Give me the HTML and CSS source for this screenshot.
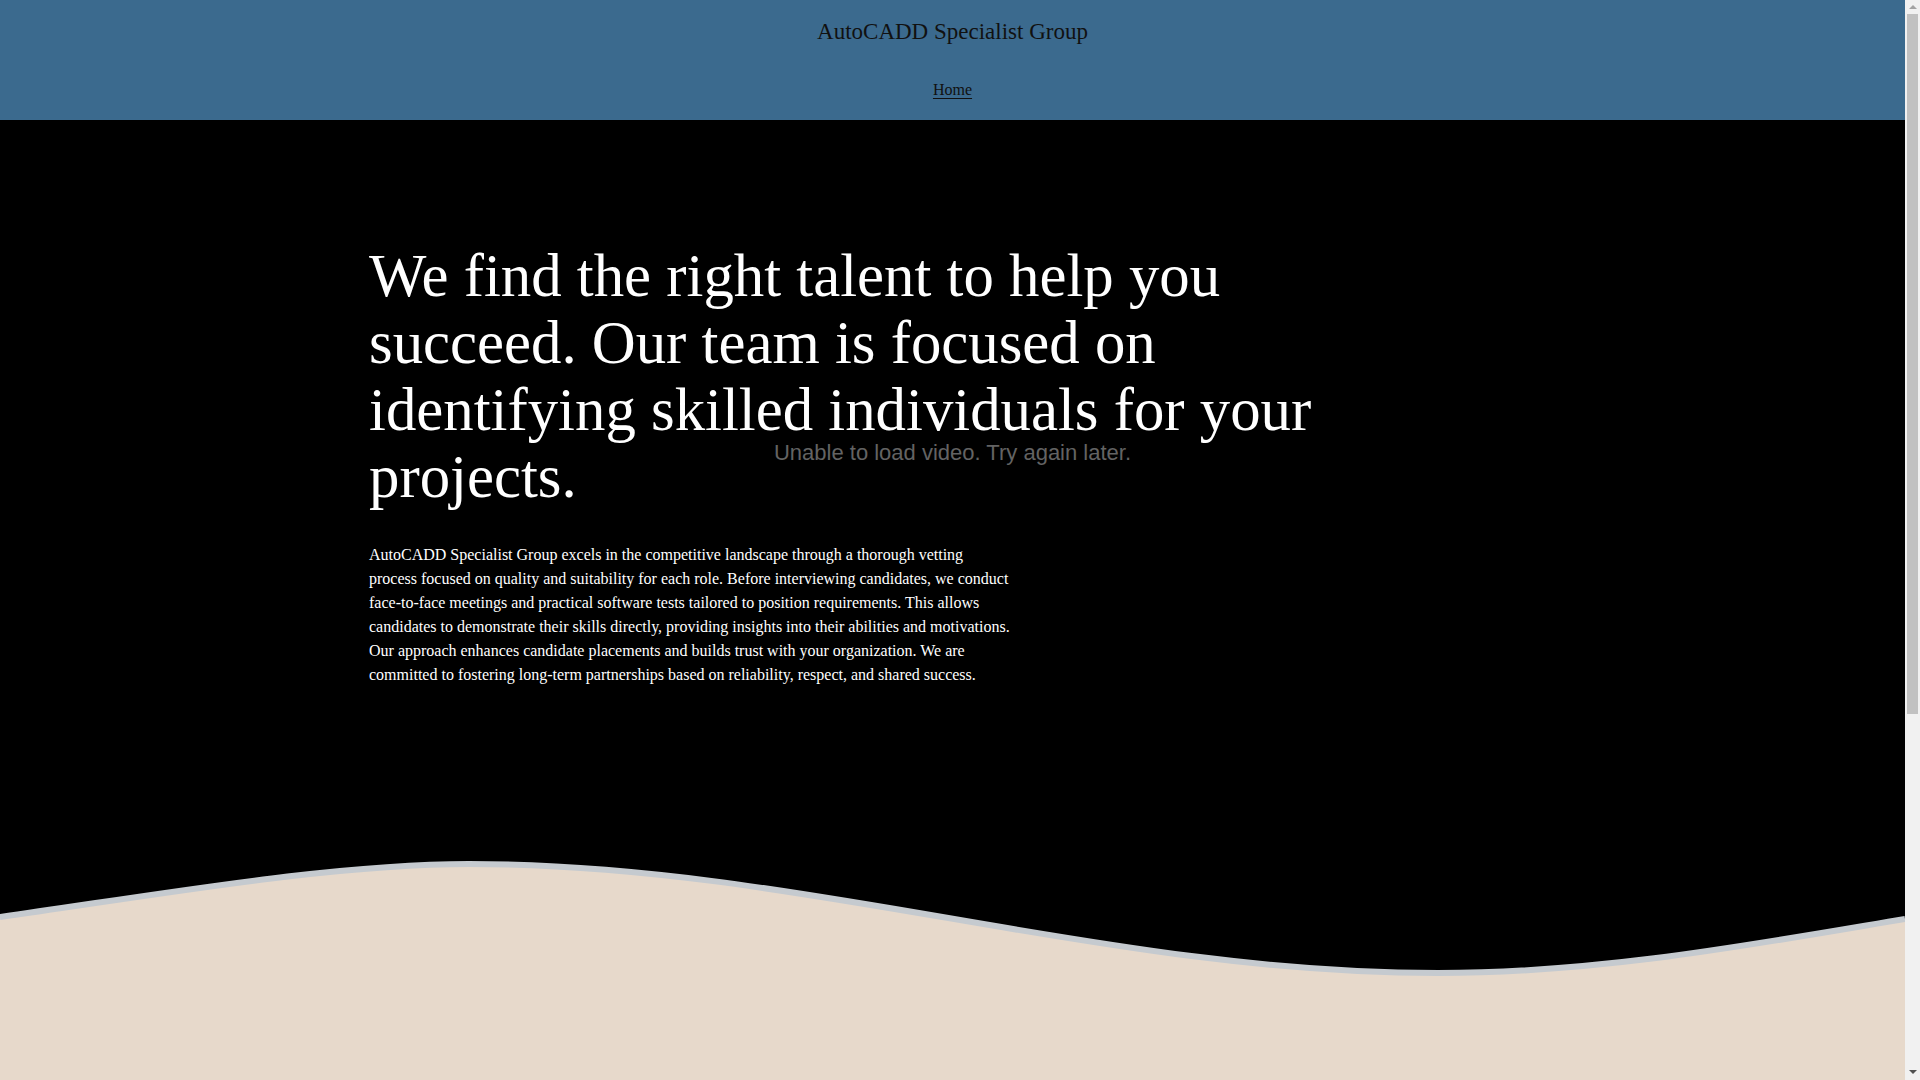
FILE: index.html
```html
<!DOCTYPE html>
<html lang="en">
<head>
<meta charset="utf-8">
<title>AutoCADD Specialist Group</title>
<link rel="stylesheet" href="styles.css">
</head>
<body>
<div class="page">
  <header class="site-header">
    <div class="site-title">AutoCADD Specialist Group</div>
    <nav class="site-nav"><a class="nav-link" href="#">Home</a></nav>
  </header>
  <section class="hero">
    <div class="hero-video"><span class="video-msg">Unable to load video. Try again later.</span></div>
    <div class="hero-inner">
      <h1 class="hero-title">We find the right talent to help you succeed. Our team is focused on identifying skilled individuals for your projects.</h1>
      <p class="hero-text">AutoCADD Specialist Group excels in the competitive landscape through a thorough vetting process focused on quality and suitability for each role. Before interviewing candidates, we conduct face-to-face meetings and practical software tests tailored to position requirements. This allows candidates to demonstrate their skills directly, providing insights into their abilities and motivations. Our approach enhances candidate placements and builds trust with your organization. We are committed to fostering long-term partnerships based on reliability, respect, and shared success.</p>
    </div>
  </section>
  <svg class="divider" viewBox="0 0 1905 135" preserveAspectRatio="none" aria-hidden="true">
    <path d="M0,0 L0,67 C150,46 330,14 469,14 C800,14 1100,123 1438,123 C1600,123 1750,95 1905,69 L1905,0 Z" fill="#000"/>
    <path d="M0,67 C150,46 330,14 469,14 C800,14 1100,123 1438,123 C1600,123 1750,95 1905,69" fill="none" stroke="#c5cacf" stroke-width="6"/>
  </svg>
  <section class="lower"></section>
</div>
<div class="scrollbar" aria-hidden="true">
  <span class="sb-arrow sb-up"></span>
  <span class="sb-thumb"></span>
  <span class="sb-fill"></span>
  <span class="sb-arrow sb-down"></span>
</div>
</body>
</html>
```

FILE: styles.css
```css
html, body {
  margin: 0;
  padding: 0;
}
body {
  font-family: "Liberation Serif", "Times New Roman", serif;
  background: #e7d9cb;
  display: flex;
  align-items: flex-start;
}
.page {
  flex: 1;
  min-width: 0;
}
.scrollbar {
  position: sticky;
  top: 0;
  width: 15px;
  height: 100vh;
  flex: none;
  background: #f1f1f1;
  display: flex;
  flex-direction: column;
  align-items: center;
}
.sb-arrow {
  flex: none;
  width: 0;
  height: 0;
  border-left: 4px solid transparent;
  border-right: 4px solid transparent;
}
.sb-up {
  margin: 5px 0 5px;
  border-bottom: 4px solid #a3a3a3;
}
.sb-down {
  margin: 5px 0 6px;
  border-top: 4px solid #505050;
}
.sb-thumb {
  width: 11px;
  height: 700px;
  background: #c1c1c1;
  flex: none;
}
.sb-fill {
  flex: 1;
}
.site-header {
  background: #3b6a8e;
  padding: 19px 0 21px;
  text-align: center;
  color: #111;
}
.site-title {
  font-size: 23px;
  line-height: 26.5px;
}
.site-nav {
  margin-top: 35px;
  font-size: 16px;
  line-height: 18.5px;
}
.nav-link {
  color: #111;
  text-decoration: underline;
  text-underline-offset: 3px;
}
.hero {
  position: relative;
  background: #000;
  height: 730px;
  box-sizing: border-box;
  padding-top: 122px;
}
.hero-video {
  position: absolute;
  left: 0;
  right: 0;
  top: 0;
  height: 666px;
  display: flex;
  align-items: center;
  justify-content: center;
}
.video-msg {
  font-family: "Liberation Sans", Arial, sans-serif;
  font-size: 22px;
  color: #636363;
}
.hero-inner {
  position: relative;
  max-width: 1167px;
  margin: 0 auto;
  color: #fff;
}
.hero-title {
  margin: 0;
  max-width: 1000px;
  font-size: 60.8px;
  line-height: 67px;
  font-weight: normal;
}
.hero-text {
  margin: 33px 0 0;
  max-width: 645px;
  font-size: 16px;
  line-height: 24px;
}
.divider {
  display: block;
  width: 100%;
  height: 135px;
  background: #e7d9cb;
}
.lower {
  height: 320px;
  background: #e7d9cb;
}
```
